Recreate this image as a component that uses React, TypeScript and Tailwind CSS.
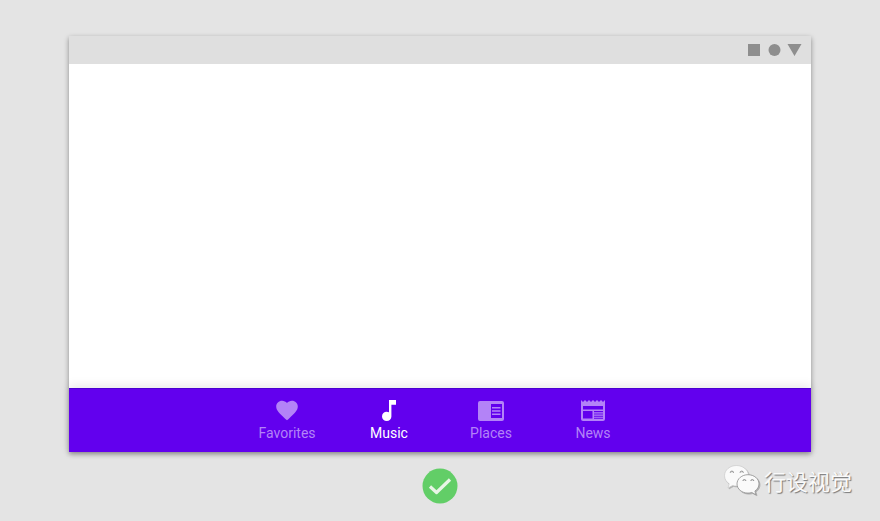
import type { ReactNode } from "react";

interface NavItem {
  label: string;
  icon: ReactNode;
  active?: boolean;
}

const HeartIcon = () => (
  <svg width="28" height="24" viewBox="0 0 28 24" fill="currentColor" aria-hidden="true">
    <path d="M14 21.3l-1.6-1.4C6.8 14.9 3.2 11.6 3.2 7.6c0-3.3 2.6-5.8 5.9-5.8 1.9 0 3.7.9 4.9 2.3 1.2-1.4 3-2.3 4.9-2.3 3.3 0 5.9 2.5 5.9 5.8 0 4-3.6 7.3-9.2 12.3L14 21.3z" />
  </svg>
);

const MusicIcon = () => (
  <svg width="28" height="24" viewBox="0 0 28 24" fill="currentColor" aria-hidden="true">
    <path d="M14 1v12.3c-.7-.4-1.5-.6-2.3-.6a4.7 4.7 0 1 0 4.7 4.700V5.700H21V1h-7z" />
  </svg>
);

const PlacesIcon = () => (
  <svg width="28" height="24" viewBox="0 0 28 24" fill="currentColor" aria-hidden="true">
    <path
      fillRule="evenodd"
      d="M3 2h22a2 2 0 0 1 2 2v16a2 2 0 0 1-2 2H3a2 2 0 0 1-2-2V4a2 2 0 0 1 2-2zm11 3v14h11V5H14z"
    />
    <path d="M15 8h8.500v1.500H15zM15 11.200h8.500v1.500H15zM15 14.500h8.500V16H15z" />
  </svg>
);

const NewsIcon = () => (
  <svg width="28" height="24" viewBox="0 0 28 24" fill="currentColor" aria-hidden="true">
    <path
      fillRule="evenodd"
      d="M2 1l2 2 2-2 2 2 2-2 2 2 2-2 2 2 2-2 2 2 2-2 2 2 2-2v19a2 2 0 0 1-2 2H4a2 2 0 0 1-2-2V1zm2 6v3.500h20V7H4zM4 12v7.500h9.500V12H4zM15 12v1.300h9V12h-9zM15 14.500v1h9v-1h-9zM15 16.700v1h9v-1h-9zM15 18.800v.9h9v-.9h-9z"
    />
  </svg>
);

const WeChatIcon = () => (
  <svg
    width="36"
    height="31"
    viewBox="0 0 36 31"
    className="drop-shadow-[1px_1px_0px_#b0b0b0]"
    aria-hidden="true"
  >
    <path
      d="M12.500.5C6 .5.5 5 .5 10.700c0 3.300 1.800 6.200 4.700 8.100L4 23l4.700-2.600c1.200.4 2.500.6 3.800.6 6.500 0 12-4.600 12-10.300S19 .5 12.500.5z"
      fill="#fafafa"
      stroke="#c4c4c4"
      strokeWidth=".6"
    />
    <path
      d="M24 9.700c-6.100 0-11 4.100-11 9.200s4.900 9.200 11 9.200c1.300 0 2.600-.2 3.800-.6l4.200 2.300-1.100-3.800c2.500-1.700 4.100-4.200 4.100-7.100 0-5.100-4.900-9.200-11-9.200z"
      fill="#fafafa"
      stroke="#999"
      strokeWidth=".9"
    />
    <g fill="#e0e0e0" stroke="#8a8a8a" strokeWidth=".9">
      <path d="M6.200 7.800a1.700 1.700 0 0 1 3.400 0" />
      <path d="M16 7.800a1.700 1.700 0 0 1 3.400 0" />
      <path d="M18.900 16a1.500 1.500 0 0 1 3 0" />
      <path d="M26.800 16a1.500 1.500 0 0 1 3 0" />
    </g>
  </svg>
);

const navItems: NavItem[] = [
  { label: "Favorites", icon: <HeartIcon /> },
  { label: "Music", icon: <MusicIcon />, active: true },
  { label: "Places", icon: <PlacesIcon /> },
  { label: "News", icon: <NewsIcon /> },
];

export default function App() {
  return (
    <div className="min-h-screen bg-[#e4e4e4] px-7 pt-9 font-[Roboto,sans-serif]">
      {/* Device frame */}
      <div className="mx-[41px] bg-white shadow-[0_2px_5px_rgba(0,0,0,0.4)]">
        <div className="flex h-7 items-center justify-end bg-[#dfdfdf] pr-2">
          <svg width="56" height="14" viewBox="0 0 56 14" fill="#8e8e8e" aria-hidden="true">
            <path d="M1 1h12v12H1zM40.500 1H54.500L47.500 13z" />
            <circle cx="27.500" cy="7" r="6" />
          </svg>
        </div>

        <main className="min-h-[324px]" />

        {/* Bottom navigation */}
        <nav className="flex h-16 justify-center border-t border-[#4a00d0] bg-[#6200ee] shadow-[0_-2px_10px_rgba(0,0,0,0.1)]">
          {navItems.map((item) => (
            <button
              key={item.label}
              type="button"
              aria-current={item.active ? "page" : undefined}
              className={`flex w-[102px] flex-col items-center gap-0.5 pt-2.5 text-sm leading-4 ${
                item.active ? "text-white" : "text-[#b383f7]"
              }`}
            >
              {item.icon}
              {item.label}
            </button>
          ))}
        </nav>
      </div>

      <footer className="grid grid-cols-3 items-start pt-3">
        <svg
          width="36"
          height="36"
          viewBox="0 0 36 36"
          className="col-start-2 mt-1 justify-self-center"
          role="img"
          aria-label="Correct"
        >
          <circle cx="18" cy="18" r="17.500" fill="#62ce67" />
          <path
            d="M8 18.500l6.500 6L28 11.500"
            fill="none"
            stroke="#e8f5e6"
            strokeWidth="3.200"
            strokeLinejoin="round"
          />
        </svg>
        <div className="flex items-center gap-1 justify-self-end font-['Noto_Sans_CJK_SC',sans-serif] text-[22px] leading-8 text-[#fafafa]">
          <WeChatIcon />
          <span className="[text-shadow:1px_1px_1px_#777]">行设视觉</span>
        </div>
      </footer>
    </div>
  );
}
